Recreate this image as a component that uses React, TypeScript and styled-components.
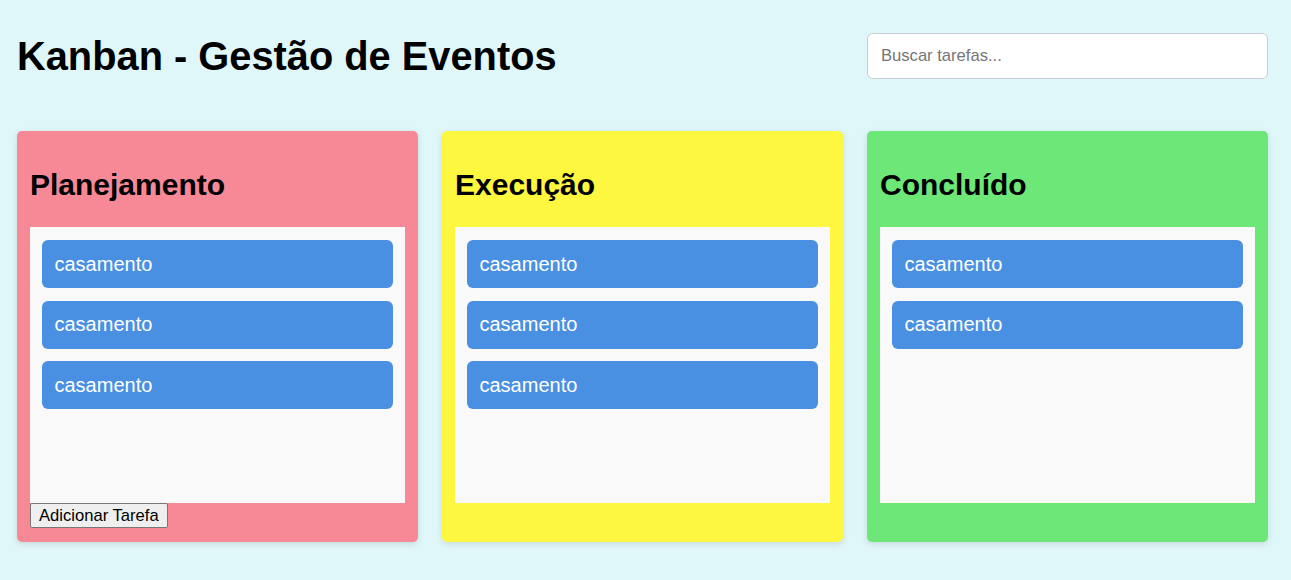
import React from 'react';
import styled, { createGlobalStyle } from 'styled-components';

const GlobalStyle = createGlobalStyle`
  html, body {
    margin: 0;
    padding: 0;
    background: #e0f7fa;
    font-family: "Liberation Sans", Arial, sans-serif;
  }
`;

const Page = styled.div`
  padding: 33px 23px 30px 17px;
`;

const Header = styled.header`
  display: flex;
  align-items: center;
  justify-content: space-between;
  margin-bottom: 52px;
`;

const Title = styled.h1`
  margin: 0;
  font-size: 39.8px;
  line-height: 46px;
  font-weight: bold;
  color: #000;
`;

const Search = styled.input`
  box-sizing: border-box;
  width: 401px;
  height: 46px;
  padding: 0 13px;
  border: 1px solid #ccc;
  border-radius: 6px;
  background: #fff;
  font-family: "Liberation Sans", Arial, sans-serif;
  font-size: 16.6px;
  outline: none;

  &::placeholder {
    color: #757575;
  }
`;

const Board = styled.div`
  display: grid;
  grid-template-columns: repeat(3, 401px);
  gap: 24px;
  align-items: stretch;
`;

const Column = styled.section<{ $bg: string }>`
  box-sizing: border-box;
  padding: 13px 13px 14px;
  background: ${(p) => p.$bg};
  border-radius: 5px;
  box-shadow: 0 2px 6px rgba(0, 0, 0, 0.12);
`;

const ColumnTitle = styled.h2`
  margin: 24px 0 25px;
  font-size: 30px;
  line-height: 34px;
  font-weight: bold;
  color: #000;
`;

const TaskList = styled.div`
  box-sizing: border-box;
  height: 276px;
  padding: 13px 12px;
  background: #f9f9f9;
  display: flex;
  flex-direction: column;
  gap: 12.5px;
`;

const Task = styled.div`
  padding: 12.5px;
  background: #4a90e2;
  border-radius: 6px;
  color: #fff;
  font-size: 20px;
  line-height: 23px;
`;

const AddButton = styled.button`
  display: block;
  box-sizing: border-box;
  height: 25px;
  padding: 0 8px;
  border: 1px solid #767676;
  border-radius: 2px;
  background: #efefef;
  color: #000;
  font-family: "Liberation Sans", Arial, sans-serif;
  font-size: 16.6px;
  line-height: 22px;
`;

const columns = [
  { title: 'Planejamento', bg: '#f78896', tasks: ['casamento', 'casamento', 'casamento'], add: true },
  { title: 'Execução', bg: '#fdf740', tasks: ['casamento', 'casamento', 'casamento'], add: false },
  { title: 'Concluído', bg: '#6de777', tasks: ['casamento', 'casamento'], add: false },
];

const App = () => {
  return (
    <Page>
      <GlobalStyle />
      <Header>
        <Title>Kanban - Gestão de Eventos</Title>
        <Search placeholder="Buscar tarefas..." />
      </Header>
      <Board>
        {columns.map((col) => (
          <Column key={col.title} $bg={col.bg}>
            <ColumnTitle>{col.title}</ColumnTitle>
            <TaskList>
              {col.tasks.map((t, i) => (
                <Task key={i}>{t}</Task>
              ))}
            </TaskList>
            {col.add && <AddButton>Adicionar Tarefa</AddButton>}
          </Column>
        ))}
      </Board>
    </Page>
  );
};

export default App;
